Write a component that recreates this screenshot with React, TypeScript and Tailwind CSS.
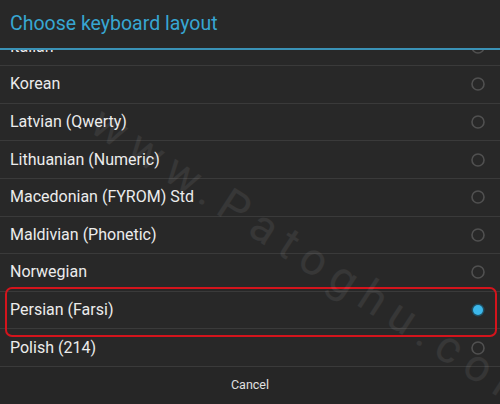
import React from "react";

const items = [
  "Italian",
  "Korean",
  "Latvian (Qwerty)",
  "Lithuanian (Numeric)",
  "Macedonian (FYROM) Std",
  "Maldivian (Phonetic)",
  "Norwegian",
  "Persian (Farsi)",
  "Polish (214)",
];

function Radio({ on }: { on: boolean }) {
  return (
    <svg width="16" height="16" viewBox="0 0 16 16" className="shrink-0">
      {on ? (
        <>
          <circle cx="8" cy="8" r="6.5" fill="#1f4f63" />
          <circle cx="8" cy="8" r="5" fill="#3cb7ea" />
        </>
      ) : (
        <circle cx="8" cy="8" r="6" fill="none" stroke="#505050" strokeWidth="1.6" />
      )}
    </svg>
  );
}

export default function App() {
  return (
    <div
      className="relative w-[500px] h-[404px] overflow-hidden bg-[#282828]"
      style={{ fontFamily: "Roboto, 'Liberation Sans', sans-serif" }}
    >
      <div className="relative z-10 h-[50px] bg-[#282828] border-b-2 border-[#3a92b6] flex items-center pl-[10px]">
        <span className="text-[19.5px] text-[#37a6d2] leading-none">Choose keyboard layout</span>
      </div>
      <div className="h-[317px] overflow-hidden">
        <div className="mt-[-21.6px]">
          {items.map((t) => (
            <div
              key={t}
              className="h-[37.625px] border-b border-[#3a3a3a] flex items-center justify-between pl-[10px] pr-[14px]"
            >
              <span className="text-[16px] text-[#ececec]">{t}</span>
              <Radio on={t === "Persian (Farsi)"} />
            </div>
          ))}
        </div>
      </div>
      <div className="h-[37px] flex items-center justify-center bg-[#262626]">
        <span className="text-[12.5px] text-[#e0e0e0]">Cancel</span>
      </div>
      <div className="absolute left-[5px] top-[287px] w-[492px] h-[50px] rounded-[7px] border-2 border-[#d4141c] pointer-events-none" />
      <div
        className="absolute left-[96px] top-[88px] h-[60px] leading-[60px] origin-left rotate-[33deg] text-[45px] text-white/[0.07] tracking-[10px] whitespace-nowrap pointer-events-none"
      >
        www.Patoghu.com
      </div>
    </div>
  );
}
